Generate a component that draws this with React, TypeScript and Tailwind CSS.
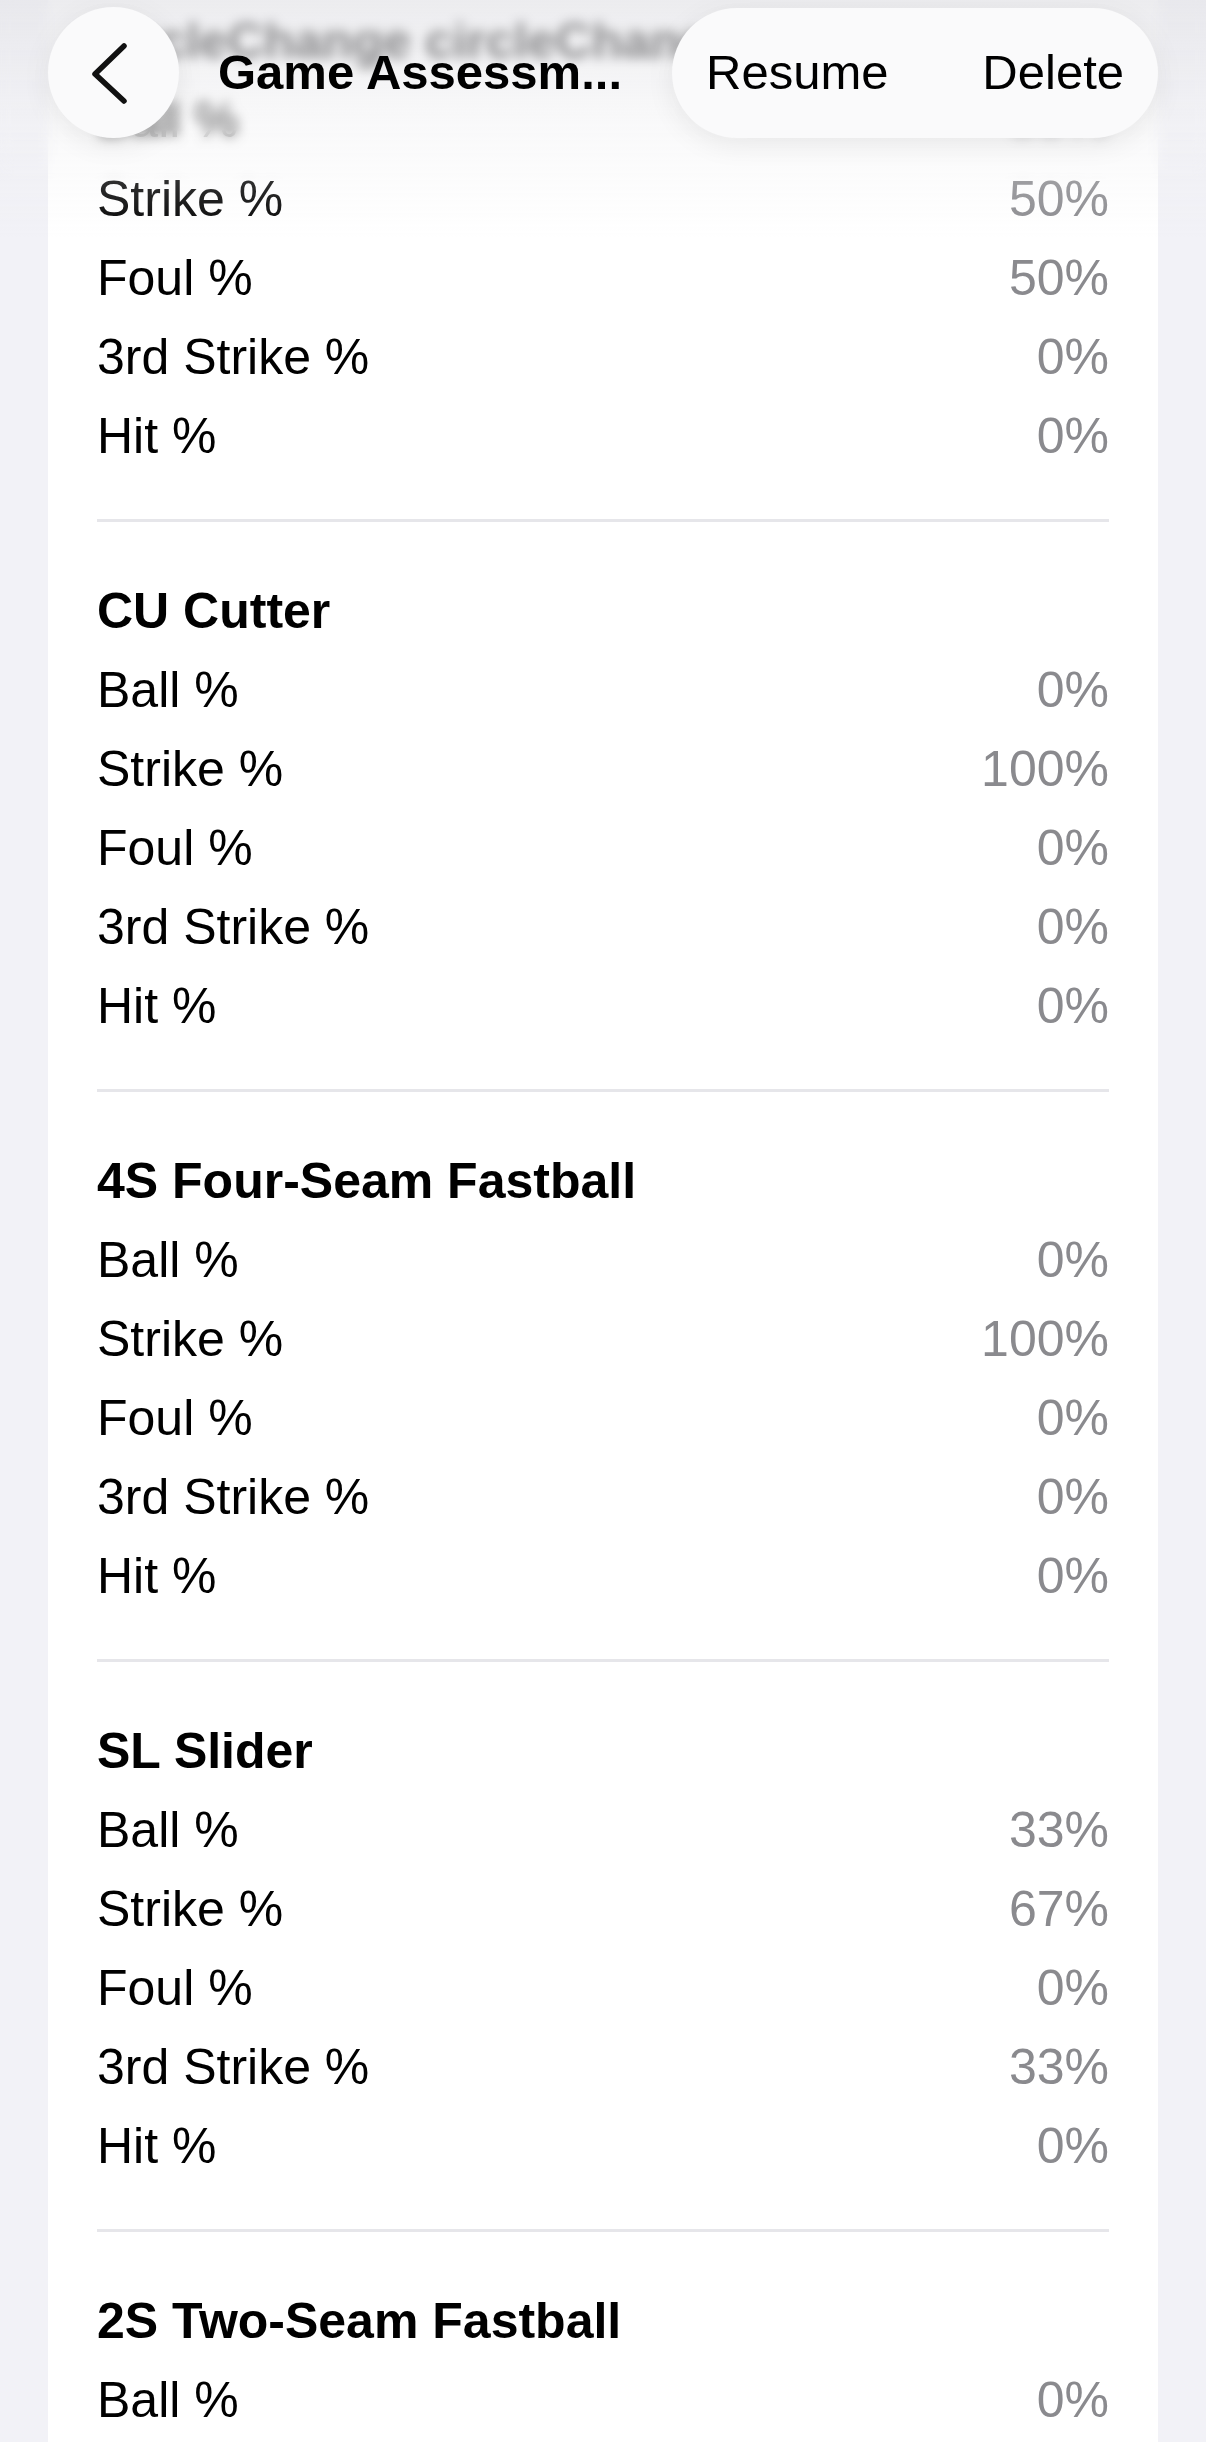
type Pitch = {
  name: string;
  values: string[];
};

const labels = ['Ball %', 'Strike %', 'Foul %', '3rd Strike %', 'Hit %'];

const pitches: Pitch[] = [
  { name: 'circleChange circleChange', values: ['50%', '50%', '50%', '0%', '0%'] },
  { name: 'CU Cutter', values: ['0%', '100%', '0%', '0%', '0%'] },
  { name: '4S Four-Seam Fastball', values: ['0%', '100%', '0%', '0%', '0%'] },
  { name: 'SL Slider', values: ['33%', '67%', '0%', '33%', '0%'] },
  { name: '2S Two-Seam Fastball', values: ['0%', '100%', '0%', '0%', '0%'] },
];

const PitchSection = ({ pitch }: { pitch: Pitch }) => (
  <section>
    <h2 className="flex h-[79px] items-center whitespace-nowrap text-[50px] font-bold leading-none text-black">
      {pitch.name}
    </h2>
    {labels.map((label, i) => (
      <div key={label} className="flex h-[79px] items-center justify-between text-[50px] leading-none">
        <span className="text-black">{label}</span>
        <span className="text-[#8a8a8e]">{pitch.values[i]}</span>
      </div>
    ))}
    <div className="mt-[44px] mb-[49px] h-[3px] bg-[#e6e6ea]" />
  </section>
);

export default function App() {
  return (
    <div className="relative h-[2442px] overflow-hidden bg-[#f2f2f7] font-['Liberation_Sans',Arial,sans-serif]">
      {/* Card content */}
      <div className="mx-[48px] h-full bg-white px-[49px] pt-[1px]">
        {pitches.map((p) => (
          <PitchSection key={p.name} pitch={p} />
        ))}
      </div>

      {/* Frosted nav background */}
      <div className="pointer-events-none absolute inset-x-0 top-0 h-[185px] backdrop-blur-[6px] [mask-image:linear-gradient(to_bottom,black_70%,transparent_98%)]" />
      <div className="pointer-events-none absolute inset-x-0 top-0 h-[240px] bg-linear-to-b from-[#e4e4e8]/70 via-[#f0f0f2]/40 to-transparent" />

      {/* Nav bar */}
      <div className="absolute inset-x-[48px] top-[7px] flex items-center">
        <button className="flex h-[131px] w-[131px] shrink-0 items-center justify-center rounded-full bg-[#fafafb] shadow-[0_6px_28px_rgba(0,0,0,0.08)]">
          <svg width="42" height="64" viewBox="0 0 42 64" className="-ml-[8px]" fill="none">
            <path
              d="M35 5 L6 33 L35 60"
              stroke="#111"
              strokeWidth="5.5"
              strokeLinecap="round"
              strokeLinejoin="round"
            />
          </svg>
        </button>
        <h1 className="ml-[39px] whitespace-nowrap text-[49px] font-bold leading-none text-black">
          Game Assessm...
        </h1>
        <div className="ml-auto flex h-[130px] w-[486px] items-center justify-between rounded-full bg-[#fafafb] px-[34px] text-[49px] leading-none text-black shadow-[0_6px_28px_rgba(0,0,0,0.08)]">
          <span>Resume</span>
          <span>Delete</span>
        </div>
      </div>
    </div>
  );
}
